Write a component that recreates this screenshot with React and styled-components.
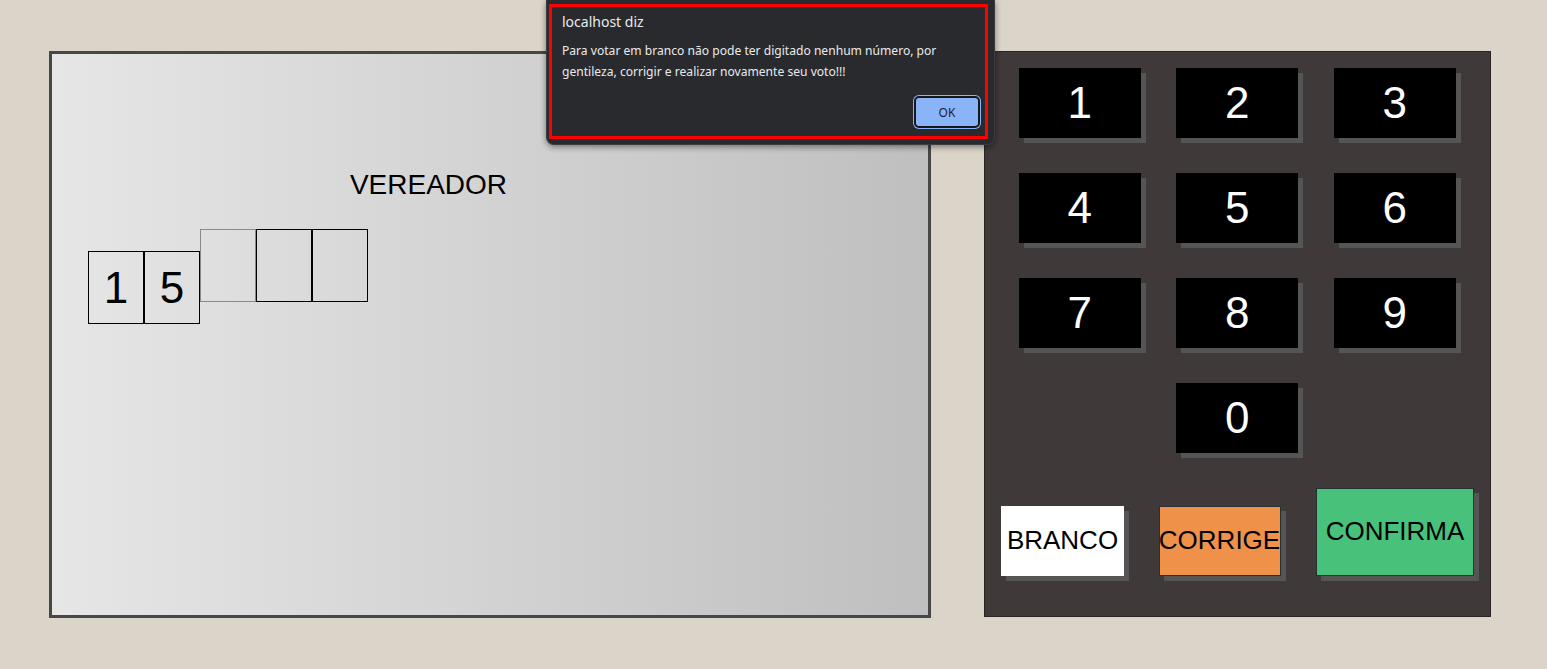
import React from "react";
import styled, { createGlobalStyle } from "styled-components";

const GlobalStyle = createGlobalStyle`
  html, body {
    margin: 0;
    padding: 0;
    background: #dbd4c9;
    font-family: "Liberation Sans", Arial, sans-serif;
  }
  * { box-sizing: border-box; }
`;

const Page = styled.div`
  position: relative;
  display: flex;
  align-items: flex-start;
  gap: 53px;
  padding: 51px 0 0 49px;
  min-height: 669px;
`;

const Screen = styled.div`
  width: 882px;
  height: 567px;
  border: 3px solid #474747;
  background: linear-gradient(to right, #e6e6e6, #bfbfbf);
  display: flex;
`;

const ScreenMain = styled.div`
  width: 753px;
  padding-top: 115px;
`;

const Office = styled.div`
  text-align: center;
  font-size: 28px;
  line-height: 32px;
  color: #000;
`;

const DigitRow = styled.div`
  display: flex;
  align-items: flex-start;
  margin-top: 28px;
  padding-left: 36px;
`;

const DigitBox = styled.div`
  width: 56px;
  height: 73px;
  margin-top: ${(p) => (p.$filled ? "22px" : "0")};
  border: 1px solid ${(p) => (p.$current ? "#8a8a8a" : "#000")};
  font-size: 44px;
  line-height: 71px;
  text-align: center;
  color: #000;
`;

const Keypad = styled.div`
  width: 507px;
  height: 566px;
  border: 1px solid #2a2525;
  background: #3f3939;
  padding: 16px 16px 0 16px;
`;

const KeyGrid = styled.div`
  display: grid;
  grid-template-columns: repeat(3, 157.5px);
  grid-template-rows: repeat(4, 70px) 88px;
  row-gap: 35px;
`;

const Key = styled.button`
  appearance: none;
  justify-self: center;
  width: 122px;
  height: 70px;
  border: none;
  padding: 0;
  background: #000;
  color: #fff;
  font-family: "Liberation Sans", Arial, sans-serif;
  font-size: 44px;
  box-shadow: 5px 5px 0 #555555;
  grid-column: ${(p) => p.$col || "auto"};
  display: flex;
  align-items: center;
  justify-content: center;
`;

const ActionButton = styled.button`
  appearance: none;
  grid-row: 5;
  justify-self: start;
  align-self: end;
  width: ${(p) => p.$w}px;
  height: ${(p) => p.$h}px;
  padding: 0 0 1px;
  border: ${(p) => (p.$bordered ? "1px solid #243232" : "none")};
  background: ${(p) => p.$bg};
  color: #000;
  font-family: "Liberation Sans", Arial, sans-serif;
  font-size: 26px;
  box-shadow: 5px 5px 0 #555555;
  display: flex;
  align-items: center;
  justify-content: center;
  white-space: nowrap;
  overflow: visible;
`;

const Dialog = styled.div`
  position: absolute;
  left: 546px;
  top: 0;
  width: 449px;
  height: 145px;
  background: #292a2d;
  border: 1px solid #3c3d40;
  border-top: none;
  border-radius: 0 0 8px 8px;
  box-shadow: 0 2px 6px rgba(0, 0, 0, 0.45);
  padding: 4px 6px 5px 2px;
  font-family: "Noto Sans", "Open Sans", sans-serif;
`;

const Highlight = styled.div`
  height: 100%;
  border: 3px solid #ff0000;
  padding: 5px 5px 8px 10px;
  display: flex;
  flex-direction: column;
`;

const DialogTitle = styled.div`
  font-size: 14px;
  line-height: 20px;
  color: #e8eaed;
`;

const DialogMessage = styled.div`
  margin-top: 8px;
  font-size: 12.1px;
  line-height: 21px;
  color: #e8eaed;
`;

const DialogActions = styled.div`
  margin-top: auto;
  display: flex;
  justify-content: flex-end;
`;

const OkButton = styled.button`
  appearance: none;
  width: 66px;
  height: 32px;
  border-radius: 5px;
  border: 2px solid #17181a;
  box-shadow: 0 0 0 1px #8ab4f8;
  background: #8ab4f8;
  color: #202124;
  font-family: "Noto Sans", "Open Sans", sans-serif;
  font-size: 12px;
  padding: 0;
`;

const digits = [
  { v: "1", filled: true },
  { v: "5", filled: true },
  { v: "", current: true },
  { v: "" },
  { v: "" },
];

export default function App() {
  return (
    <>
      <GlobalStyle />
      <Page>
        <Screen>
          <ScreenMain>
            <Office>VEREADOR</Office>
            <DigitRow>
              {digits.map((d, i) => (
                <DigitBox key={i} $filled={d.filled} $current={d.current}>
                  {d.v}
                </DigitBox>
              ))}
            </DigitRow>
          </ScreenMain>
        </Screen>
        <Keypad>
          <KeyGrid>
            {["1", "2", "3", "4", "5", "6", "7", "8", "9"].map((n) => (
              <Key key={n}>{n}</Key>
            ))}
            <Key $col="2">0</Key>
            <ActionButton $w={123} $h={70} $bg="#ffffff">
              BRANCO
            </ActionButton>
            <ActionButton $w={122} $h={70} $bg="#f0914a" $bordered>
              CORRIGE
            </ActionButton>
            <ActionButton $w={158} $h={88} $bg="#48c27b" $bordered>
              CONFIRMA
            </ActionButton>
          </KeyGrid>
        </Keypad>
        <Dialog>
          <Highlight>
            <DialogTitle>localhost diz</DialogTitle>
            <DialogMessage>
              Para votar em branco não pode ter digitado nenhum número, por
              <br />
              gentileza, corrigir e realizar novamente seu voto!!!
            </DialogMessage>
            <DialogActions>
              <OkButton>OK</OkButton>
            </DialogActions>
          </Highlight>
        </Dialog>
      </Page>
    </>
  );
}
